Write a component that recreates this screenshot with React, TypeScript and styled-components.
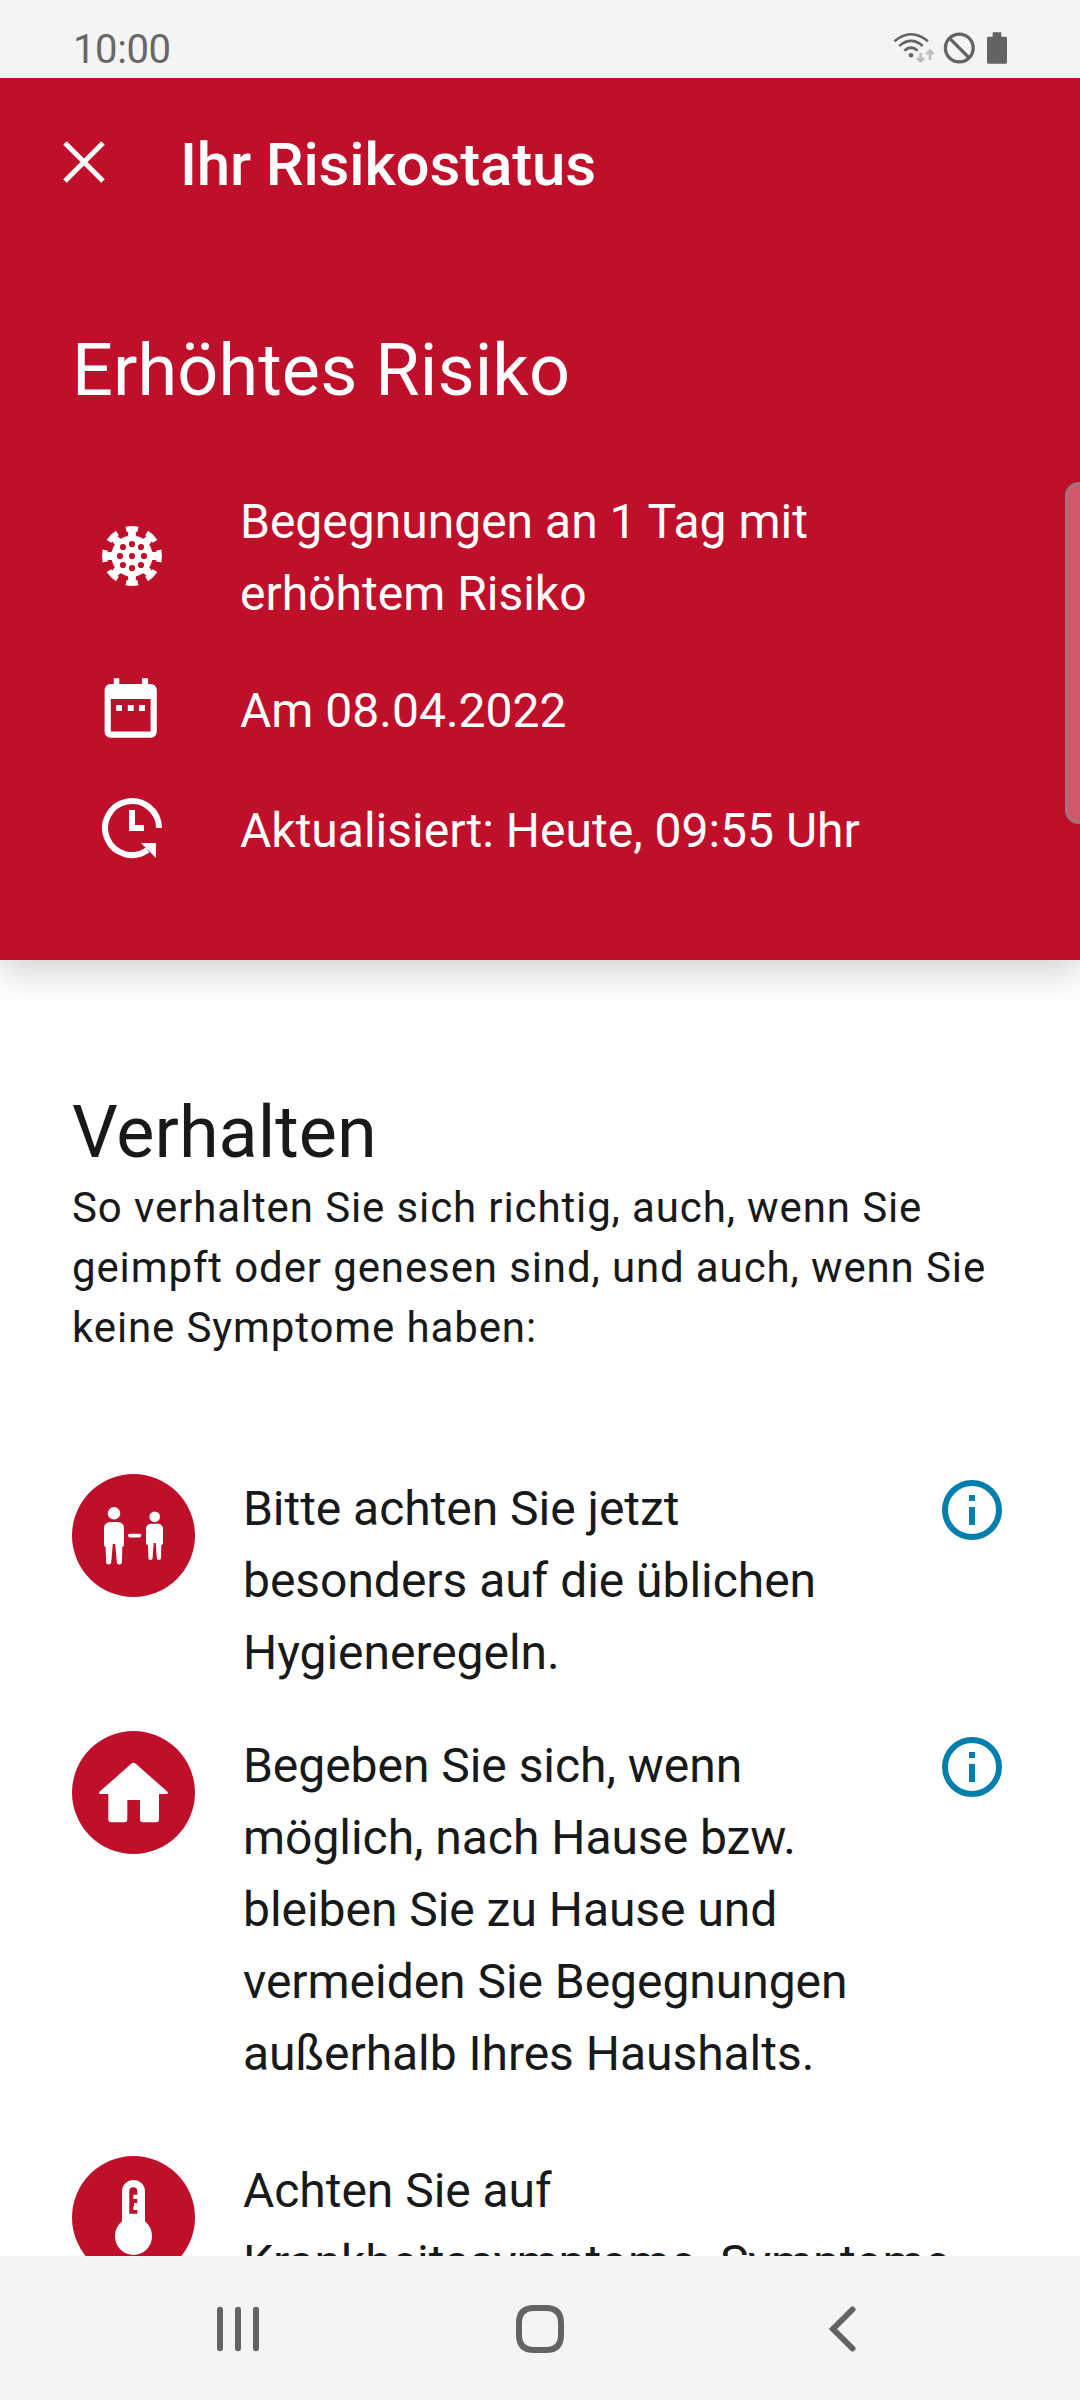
import React from "react";
import styled, { createGlobalStyle } from "styled-components";

const RED = "#c00f2a";
const INK = "#17191a";
const GREY = "#636363";
const BAR = "#f4f4f4";

const GlobalStyle = createGlobalStyle`
  * { box-sizing: border-box; }
  html, body { margin: 0; padding: 0; background: #fff; }
  body { font-family: Roboto, "Noto Sans", sans-serif; }
  svg { display: block; }
`;

const Screen = styled.div`
  position: relative;
  display: flex;
  flex-direction: column;
  width: 1080px;
  height: 2400px;
  overflow: hidden;
  background: #fff;
  color: ${INK};
`;

const StatusBar = styled.header`
  position: relative;
  z-index: 1;
  display: flex;
  justify-content: space-between;
  flex: none;
  height: 78px;
  padding: 26px 73px 0 73px;
  background: ${BAR};
`;

const Clock = styled.span`
  font-size: 40px;
  line-height: 48px;
  letter-spacing: -0.4px;
  color: #676767;
`;

const StatusIcons = styled.svg`
  width: 114px;
  height: 40px;
`;

const RiskPanel = styled.section`
  position: relative;
  flex: none;
  height: 882px;
  background: ${RED};
  color: #fff;
  box-shadow: 0 8px 40px rgba(0, 0, 0, 0.22);
`;

const Toolbar = styled.div`
  display: flex;
  align-items: center;
  height: 168px;
  padding-left: 48px;
  gap: 60px;
`;

const CloseButton = styled.button`
  width: 72px;
  height: 72px;
  padding: 0;
  border: 0;
  background: none;
  color: inherit;
`;

const ToolbarTitle = styled.h1`
  margin: 5px 0 0;
  font-size: 60px;
  line-height: 72px;
  font-weight: 500;
  letter-spacing: -0.15px;
`;

const RiskHeadline = styled.h2`
  margin: 80px 0 0 72px;
  font-size: 72px;
  line-height: 90px;
  font-weight: 400;
  letter-spacing: 0.1px;
`;

const FactList = styled.ul`
  display: flex;
  flex-direction: column;
  margin: 70px 0 0;
  padding: 0 72px 0 96px;
  list-style: none;
`;

const Fact = styled.li<{ $gap?: number }>`
  display: flex;
  align-items: center;
  gap: 72px;
  margin-top: ${(p) => p.$gap ?? 0}px;
`;

const FactIcon = styled.svg<{ $lift: number }>`
  flex: none;
  width: 72px;
  height: 72px;
  margin-bottom: ${(p) => p.$lift * 2}px;
  margin-top: ${(p) => p.$lift * -2}px;
`;

const FactText = styled.span`
  font-size: 48px;
  line-height: 72px;
  white-space: pre-line;
`;

const EdgeHandle = styled.div`
  position: absolute;
  top: 482px;
  right: -20px;
  width: 35px;
  height: 342px;
  border: 3px solid #a0747c;
  border-radius: 14px;
  background: rgba(255, 255, 255, 0.3);
`;

const Content = styled.main`
  flex: 1;
  min-height: 0;
  overflow: hidden;
  padding: 128px 72px 0;
`;

const SectionTitle = styled.h2`
  margin: 0;
  font-size: 72px;
  line-height: 90px;
  font-weight: 400;
`;

const SectionIntro = styled.p`
  margin: 0;
  font-size: 42px;
  line-height: 60px;
  letter-spacing: 0.88px;
  white-space: pre-line;
`;

const AdviceList = styled.ul`
  display: flex;
  flex-direction: column;
  margin: 116px 0 0;
  padding: 0;
  list-style: none;
`;

const Advice = styled.li<{ $after?: number }>`
  display: grid;
  grid-template-columns: 123px 1fr auto;
  column-gap: 48px;
  align-items: start;
  margin-bottom: ${(p) => p.$after ?? 0}px;
`;

const Badge = styled.span`
  width: 123px;
  height: 123px;
  border-radius: 50%;
  background: ${RED};
`;

const AdviceText = styled.p`
  margin: -1px 0 0;
  font-size: 48px;
  line-height: 72px;
  letter-spacing: -0.04px;
  white-space: pre-line;
`;

const InfoButton = styled.button`
  width: 72px;
  height: 72px;
  padding: 0;
  border: 0;
  background: none;
  color: #007fad;
`;

const NavBar = styled.nav`
  display: flex;
  flex: none;
  align-items: center;
  justify-content: space-between;
  height: 144px;
  padding: 2px 202px 0;
  background: ${BAR};
`;

const NavIcon = styled.svg`
  width: 72px;
  height: 72px;
  fill: none;
  stroke: ${GREY};
  stroke-width: 6;
`;

const VirusIcon = () => (
  <FactIcon viewBox="-36 -36 72 72" $lift={1}>
    <circle r="20.6" fill="#fff" />
    {[0, 45, 90, 135, 180, 225, 270, 315].map((a) => (
      <path
        key={a}
        transform={`rotate(${a})`}
        fill="#fff"
        d="M-6.5-29.300Q0-30.700 6.500-29.300L5.300-24L3.700-24.300L4.300-19H-4.300L-3.700-24.300L-5.300-24Z"
      />
    ))}
    {[[0, 0], [0, -12], [0, 12], [-12, 0], [12, 0], [-9, -9], [9, -9], [-9, 9], [9, 9]].map(([x, y]) => (
      <circle key={`${x},${y}`} cx={x} cy={y} r="3.100" fill={RED} />
    ))}
  </FactIcon>
);

const CalendarIcon = () => (
  <FactIcon viewBox="0 0 72 72" $lift={1.5}>
    <path
      fill="#fff"
      fillRule="evenodd"
      d="M17.8 6.3h5.5V12h22.7V6.3h6.1V12h2.7a6 6 0 0 1 6 6v41.700a6 6 0 0 1-6 6H14.600a6 6 0 0 1-6-6V18a6 6 0 0 1 6-6h3.200ZM14.800 27v32.400h39.800V27ZM20.100 33H26v6h-5.900ZM31.800 33h5.900v6h-5.900ZM43 33h6v6h-6Z"
    />
  </FactIcon>
);

const UpdateIcon = () => (
  <FactIcon viewBox="0 0 24 24" $lift={1.5}>
    <path d="M21 12A9 9 0 1 0 17.2 19.35" fill="none" stroke="#fff" strokeWidth="2" />
    <path d="M11 6h2v5h3v2h-5ZM15 17h5v5Z" fill="#fff" />
  </FactIcon>
);

const PeopleIcon = () => (
  <svg width="123" height="123" viewBox="0 0 123 123" fill="#fff">
    <circle cx="42" cy="39.3" r="6.2" />
    <path d="M38 48h8a6 6 0 0 1 6 6v17q0 1.7-1.7 1.8l-.3 15a2.6 2.6 0 0 1-5.2 0L43.2 70h-2.4L39.3 87.8a2.6 2.6 0 0 1-5.2 0l-.5-15Q32 72.7 32 71V54a6 6 0 0 1 6-6Z" />
    <rect x="56" y="59.7" width="13.3" height="3.7" rx="1.8" />
    <circle cx="82.7" cy="42.7" r="5.3" />
    <path d="M79 49.7h7a5 5 0 0 1 5 5v14.600q0 1.600-1.700 1.700l-.3 13a2.100 2.100 0 0 1-4.200 0L83.700 69h-2L80.600 84a2.100 2.100 0 0 1-4.200 0l-.4-13Q74 70.900 74 69.300V54.700a5 5 0 0 1 5-5Z" />
  </svg>
);

const HouseIcon = () => (
  <svg width="123" height="123" viewBox="0 0 123 123" fill="#fff">
    <path d="M59.8 32.3q1.7-1.2 3.4 0L95.5 60.8q1.2 2.2-1 2.2H87v25.3a3 3 0 0 1-3 3H71a3 3 0 0 1-3-3V69H55.3v19.3a3 3 0 0 1-3 3h-13a3 3 0 0 1-3-3V63h-7.8q-2.2 0-1-2.2Z" />
  </svg>
);

const ThermometerIcon = () => (
  <svg width="123" height="123" viewBox="0 0 123 123">
    <path
      fill="#fff"
      d="M50 35.5a11.5 11.5 0 0 1 23 0V65.3Q80 71 80 80.500A18.500 18.500 0 0 1 43 80.500Q43 71 50 65.300Z"
    />
    <path
      fill={RED}
      d="M57.3 35.3a4 4 0 0 1 8 0v3.400h-4V43h4v4H62v3.500h-.7V54h4v3.700h-8Z"
    />
  </svg>
);

const InfoIcon = () => (
  <svg width="72" height="72" viewBox="0 0 24 24" fill="currentColor">
    <circle cx="12" cy="12" r="9" fill="none" stroke="currentColor" strokeWidth="2" />
    <path d="M11 7h2v2h-2ZM11 11h2v6h-2Z" />
  </svg>
);

const advice = [
  {
    icon: <PeopleIcon />,
    text: "Bitte achten Sie jetzt\nbesonders auf die üblichen\nHygieneregeln.",
    info: true,
    after: 42,
  },
  {
    icon: <HouseIcon />,
    text: "Begeben Sie sich, wenn\nmöglich, nach Hause bzw.\nbleiben Sie zu Hause und\nvermeiden Sie Begegnungen\naußerhalb Ihres Haushalts.",
    info: true,
    after: 66,
  },
  {
    icon: <ThermometerIcon />,
    text: "Achten Sie auf\nKrankheitssymptome. Symptome",
    info: false,
    after: 0,
  },
];

export default function App() {
  return (
    <Screen>
      <GlobalStyle />
      <StatusBar>
        <Clock>10:00</Clock>
        <StatusIcons viewBox="893 26 114 40">
          <g fill="none" stroke={GREY} strokeWidth="2.6">
            <path d="M894.5 41.2Q911 27.3 928 41.2" />
            <path d="M899.3 45.9Q911 36 922.7 45.9" />
            <path d="M904.3 50.6Q911 44.6 917.7 50.6" />
            <circle cx="959.3" cy="48" r="13.9" strokeWidth="3.3" />
            <path d="M949.5 38.2L969.1 57.8" strokeWidth="3.3" />
          </g>
          <circle cx="911" cy="55.3" r="2.3" fill={GREY} />
          <g fill="none" stroke="#bdbdbd" strokeWidth="2.6">
            <path d="M920.6 52.700V61.500M917 58L920.600 61.500L924.200 58" />
            <path d="M930 60V50.500M926.400 54L930 50.500L933.600 54" />
          </g>
          <path
            fill={GREY}
            d="M992.7 32.3h8.600v4.400h4.200a1.500 1.500 0 0 1 1.500 1.500v24a1.500 1.500 0 0 1-1.500 1.500h-17a1.500 1.500 0 0 1-1.500-1.500v-24a1.500 1.500 0 0 1 1.500-1.500h4.200Z"
          />
        </StatusIcons>
      </StatusBar>

      <RiskPanel>
        <Toolbar>
          <CloseButton aria-label="Schließen">
            <svg width="72" height="72" viewBox="0 0 72 72" stroke="#fff" strokeWidth="5">
              <path d="M17 17L55 55M55 17L17 55" />
            </svg>
          </CloseButton>
          <ToolbarTitle>Ihr Risikostatus</ToolbarTitle>
        </Toolbar>
        <RiskHeadline>Erhöhtes Risiko</RiskHeadline>
        <FactList>
          <Fact>
            <VirusIcon />
            <FactText>{"Begegnungen an 1 Tag mit\nerhöhtem Risiko"}</FactText>
          </Fact>
          <Fact $gap={45}>
            <CalendarIcon />
            <FactText>Am 08.04.2022</FactText>
          </Fact>
          <Fact $gap={48}>
            <UpdateIcon />
            <FactText>Aktualisiert: Heute, 09:55 Uhr</FactText>
          </Fact>
        </FactList>
      </RiskPanel>

      <Content>
        <SectionTitle>Verhalten</SectionTitle>
        <SectionIntro>
          {"So verhalten Sie sich richtig, auch, wenn Sie\ngeimpft oder genesen sind, und auch, wenn Sie\nkeine Symptome haben:"}
        </SectionIntro>
        <AdviceList>
          {advice.map((item) => (
            <Advice key={item.text} $after={item.after}>
              <Badge>{item.icon}</Badge>
              <AdviceText>{item.text}</AdviceText>
              {item.info && (
                <InfoButton aria-label="Info">
                  <InfoIcon />
                </InfoButton>
              )}
            </Advice>
          ))}
        </AdviceList>
      </Content>

      <NavBar>
        <NavIcon viewBox="202 2293 72 72" strokeLinecap="round">
          <path d="M220 2309.7V2348.3M238 2309.7V2348.3M256 2309.7V2348.3" />
        </NavIcon>
        <NavIcon viewBox="504 2293 72 72">
          <path d="M534 2308H546Q561 2308 561 2323V2335Q561 2350 546 2350H534Q519 2350 519 2335V2323Q519 2308 534 2308Z" />
        </NavIcon>
        <NavIcon viewBox="806 2293 72 72" strokeLinecap="round">
          <path d="M852.5 2309.5L833 2329L852.5 2348.5" />
        </NavIcon>
      </NavBar>
      <EdgeHandle />
    </Screen>
  );
}
